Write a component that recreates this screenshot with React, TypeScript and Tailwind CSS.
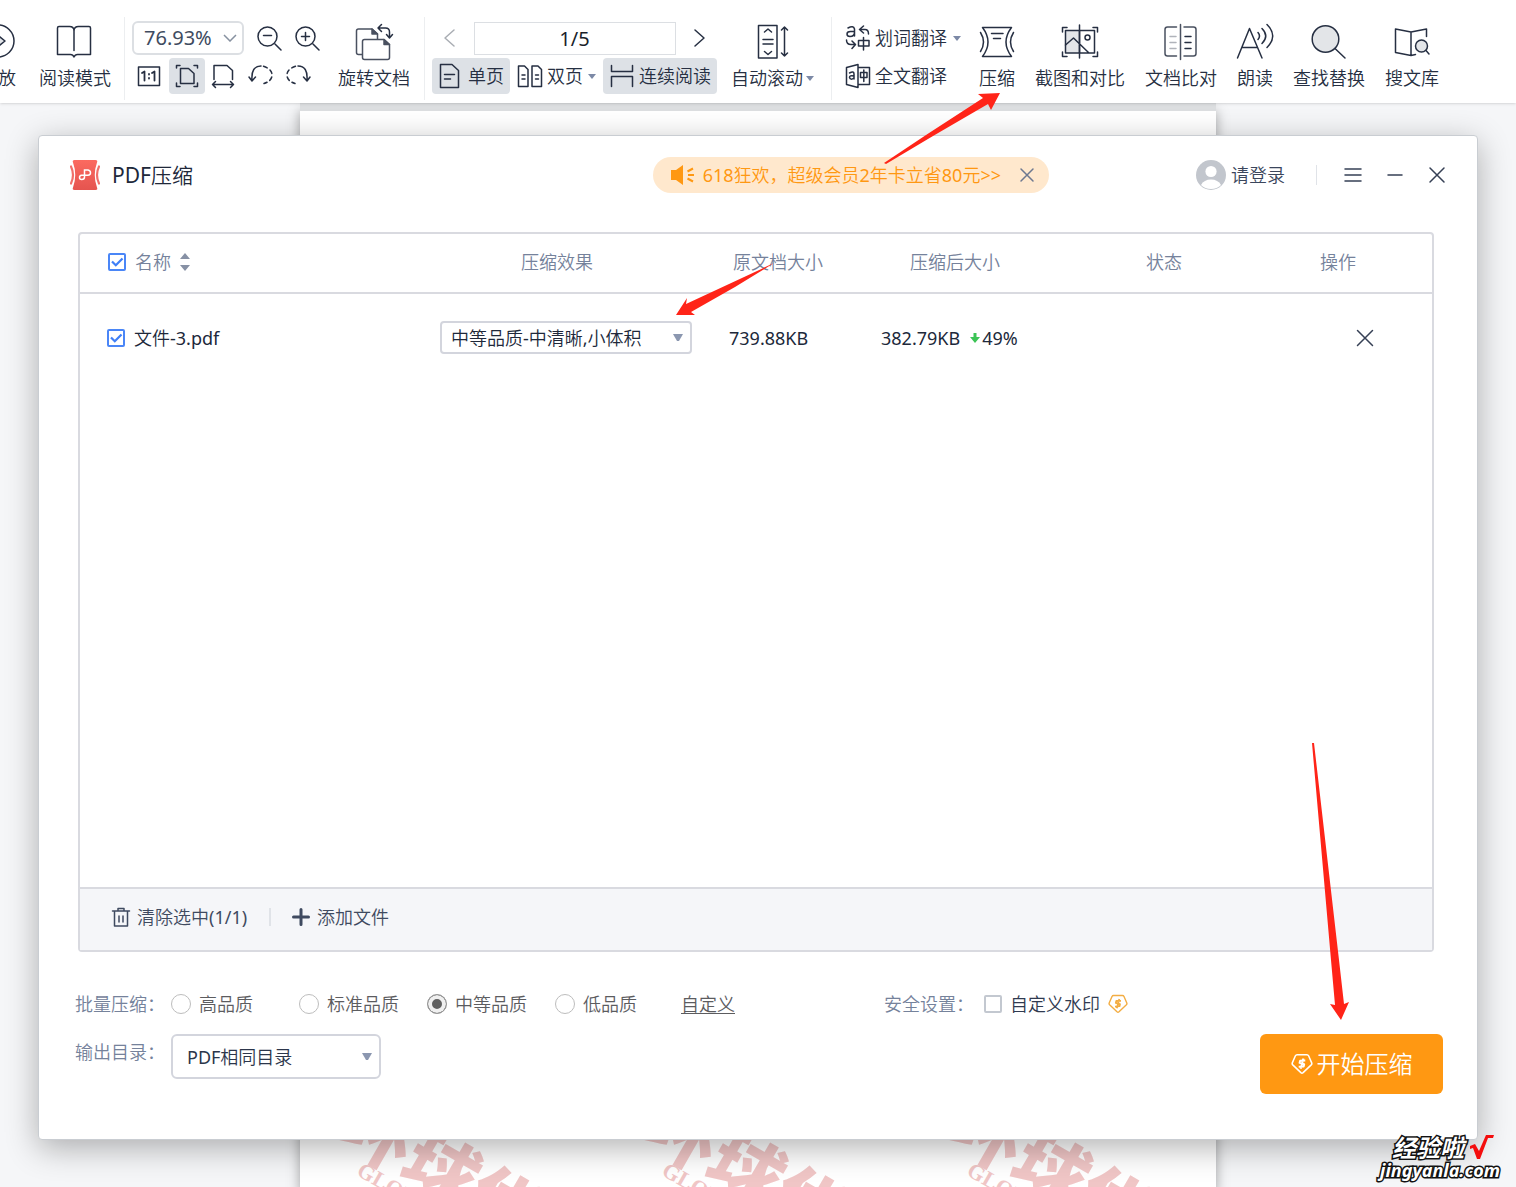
import { ReactNode } from "react"

type IconProps = {
  children: ReactNode
  size?: number
  className?: string
}

const Icon = ({ children, size = 40, className = "" }: IconProps) => (
  <svg
    width={size}
    height={size}
    viewBox={`0 0 ${size} ${size}`}
    fill="none"
    stroke="currentColor"
    strokeWidth="1.5"
    strokeLinecap="round"
    strokeLinejoin="round"
    aria-hidden="true"
    className={`shrink-0 ${className}`}
  >
    {children}
  </svg>
)

const Caret = ({ className = "" }: { className?: string }) => (
  <svg width="8" height="5" viewBox="0 0 8 5" aria-hidden="true" className={`shrink-0 fill-[#7c89a6] ${className}`}>
    <path d="M0 0H8L4 5Z" />
  </svg>
)

const Tool = ({ label, icon, caret, className = "" }: { label: string; icon: ReactNode; caret?: boolean; className?: string }) => (
  <button className={`flex shrink-0 flex-col items-center gap-1 pt-[5px] ${className}`}>
    <Icon>{icon}</Icon>
    <span className="flex items-center gap-[3px] whitespace-nowrap leading-6">
      {label}
      {caret && <Caret />}
    </span>
  </button>
)

const Divider = () => <div className="w-px shrink-0 self-stretch bg-[#eceef0]" />

const Toolbar = () => {
  return (
    <header className="relative z-10 flex items-start overflow-hidden bg-white pt-[17px] pb-[3px] text-lg text-[#262f42] shadow-sm">
      <Tool
        label="放"
        className="-ml-5 w-9 [&>span]:self-end"
        icon={
          <>
            <circle cx="20" cy="19" r="16" />
            <path d="M19 12.500L27 19L19 25.500Z" fill="#e3e5e8" />
          </>
        }
      />
      <Tool
        label="阅读模式"
        className="ml-[23px] mr-[13px]"
        icon={<path d="M2.500 32.500V6Q2.500 4.500 4 4.500H14.500Q19 4.500 19 9Q19 4.500 23.500 4.500H34Q35.500 4.500 35.500 6V32.500H22.500Q20 32.500 19 35Q18 32.500 15.500 32.500ZM19 9V28.500" />}
      />
      <Divider />

      <div className="flex shrink-0 flex-col gap-0.5 px-[7px] pt-[3px] pb-1.5">
        <div className="flex h-9 items-center gap-3">
          <div className="relative">
            <select aria-label="缩放" className="h-[34px] w-[112px] appearance-none rounded-md border-2 border-[#dcdfe3] bg-white pl-2.5 text-xl text-[#404b60]">
              <option>76.93%</option>
            </select>
            <svg width="14" height="8" viewBox="0 0 14 8" className="pointer-events-none absolute top-[13px] right-[7px] fill-none stroke-[#8791a0] stroke-[1.500]" aria-hidden="true">
              <path d="M1 1L7 7L13 1" />
            </svg>
          </div>
          <button aria-label="缩小">
            <Icon size={26}>
              <circle cx="11.500" cy="11.500" r="9.500" />
              <path d="M7.500 10.500H15.500M19 19L25 25" />
            </Icon>
          </button>
          <button aria-label="放大">
            <Icon size={26}>
              <circle cx="11.500" cy="11.500" r="9.500" />
              <path d="M7.500 11.500H15.500M11.500 7.500V15.500M19 19L25 25" />
            </Icon>
          </button>
        </div>
        <div className="flex h-9 items-center">
          <button aria-label="实际大小" className="ml-1 mr-[7px]">
            <Icon size={26}>
              <path d="M2.500 4H23.500V22.500H2.500Z" />
              <path d="M6 10L8.500 8.500V17.500M16 10L18.500 8.500V17.500M13 11V11.500M13 15V15.500" strokeWidth="1.800" />
            </Icon>
          </button>
          <button aria-label="适合页面" className="rounded bg-[#dde1e6] p-[5px]">
            <Icon size={26}>
              <path d="M2.500 5V2.500H6M20 2.500H23.500V5M2.500 20V23.500H6M20 23.500H23.500V20M6.500 5.500H14.500L20 10.500V20.500H6.500Z" />
            </Icon>
          </button>
          <button aria-label="适合宽度" className="ml-[5px]">
            <Icon size={26}>
              <path d="M4 16.500V2.500H17L22.500 7.500V16.500M2.500 21.500H23.500M5.500 18.500L2.500 21.500L5.500 24.500M20.500 18.500L23.500 21.500L20.500 24.500" />
            </Icon>
          </button>
          <button aria-label="向左旋转" className="ml-3">
            <Icon size={26}>
              <path d="M4 17Q3 3 13 3M1 14L4 18L7.500 14" />
              <path d="M15.500 3.300Q24 6 24 12Q24 18 16 20.500" strokeDasharray="4 3.500" />
            </Icon>
          </button>
          <button aria-label="向右旋转" className="ml-[11px]">
            <Icon size={26}>
              <path d="M22 17Q23 3 13 3M25 14L22 18L18.500 14" />
              <path d="M10.500 3.300Q2 6 2 12Q2 18 10 20.500" strokeDasharray="4 3.500" />
            </Icon>
          </button>
        </div>
      </div>

      <Tool
        label="旋转文档"
        className="ml-[11px] mr-3.5"
        icon={
          <g stroke="#4a5160">
            <path d="M8 32.500H4.500Q2.500 32.500 2.500 30.500V9Q2.500 7 4.500 7H18L23.500 12V17" />
            <path d="M10.500 17.500H30L35.500 22.500V35.500Q35.500 37.500 33.500 37.500H10.500Q8.500 37.500 8.500 35.500V19.500Q8.500 17.500 10.500 17.500Z" fill="white" />
            <path d="M30 17.500V22.500H35.500ZM18 7V12H23.500Z" fill="#4a5160" />
            <path d="M24 6H31.500Q35.500 6 35.500 10V15.500M27.500 2.500L24 6L27.500 9.500M32.500 12.500L35.500 16L38.500 12.500" stroke="#262f42" />
          </g>
        }
      />
      <Divider />

      <div className="flex shrink-0 flex-col gap-0.5 px-[7px] pt-[3px] pb-1.5">
        <div className="flex h-9 items-center justify-between px-2.5">
          <button aria-label="上一页" className="text-[#a9adb3]">
            <Icon size={16} className="overflow-visible">
              <path d="M12 0L3 8L12 16" />
            </Icon>
          </button>
          <input aria-label="页码" defaultValue="1/5" className="h-[33px] w-[202px] border border-[#dcdfe3] text-center text-xl text-[#1a1f2b]" />
          <button aria-label="下一页">
            <Icon size={16} className="overflow-visible">
              <path d="M4 0L13 8L4 16" />
            </Icon>
          </button>
        </div>
        <div className="flex h-9 items-center gap-[7px]">
          <button className="flex h-9 items-center gap-1 whitespace-nowrap rounded bg-[#dde1e6] px-1.5">
            <Icon size={26}>
              <path d="M2.500 1.500H14L20.500 7.500V24.500H2.500ZM6.500 11.500H16.500M6.500 16H12.500" />
            </Icon>
            单页
          </button>
          <button className="flex items-center gap-1 whitespace-nowrap">
            <Icon size={26}>
              <path d="M1.500 3H7.500L11 6.500V23.500H1.500ZM15 3H21L24.500 6.500V23.500H15ZM5 12H8M5 16H8M18.500 12H21.500M18.500 16H21.500" />
            </Icon>
            双页
            <Caret className="ml-px" />
          </button>
          <button className="flex h-9 items-center gap-1 whitespace-nowrap rounded bg-[#dde1e6] px-1.5">
            <Icon size={26}>
              <path d="M2.500 2.500V8.500H23.500V2.500M2.500 23.500V13.500H23.500V23.500" />
            </Icon>
            连续阅读
          </button>
        </div>
      </div>

      <Tool
        label="自动滚动"
        caret
        className="ml-[7px] mr-[17px]"
        icon={
          <path d="M5.500 3.500H24V36H5.500ZM11.500 10L15 7L18.500 10M10 17.500H20M10 22H20M11.500 29.500L15 32.500L18.500 29.500M31.500 5V34M28.500 8L31.500 5L34.500 8M28.500 31L31.500 34L34.500 31" />
        }
      />
      <Divider />

      <div className="flex shrink-0 flex-col items-start gap-0.5 pt-[3px] pb-1.5 pl-[13px]">
        <button className="flex h-9 items-center gap-1 whitespace-nowrap">
          <Icon size={26}>
            <path d="M3 3Q8.500 0 9.500 4V11M9.500 6.500H5.500Q2 6.500 2 9Q2 11.500 5 11.500Q9.500 11.500 9.500 7M18.500 1L14.500 4.500L18.500 8M15 4.500H20Q23.500 4.500 23.500 9M13.500 15.500H24V21H13.500ZM18.500 12.500V25M1.500 15Q1.500 19.500 6 19.500H9.500M7 16L10.500 19.500L7 23.500" />
          </Icon>
          划词翻译
          <Caret className="ml-0.5" />
        </button>
        <button className="flex h-9 items-center gap-1 whitespace-nowrap">
          <Icon size={26}>
            <path d="M13 1.500V24.500L1.500 21.500V4.500ZM13 4.500H24.500V21.500H13M4.500 10Q9 7.500 9 11V16M9 13Q4.500 12 4.500 14.500Q5.500 17.500 9 15M15.500 9.500H22V14.500H15.500ZM18.800 7V18.500" />
          </Icon>
          全文翻译
        </button>
      </div>

      <div className="ml-[18px] flex gap-5">
        <Tool
          label="压缩"
          className="w-9"
          icon={<path d="M5.500 5.500H34.500Q23.500 20 34.500 34.500H5.500Q16.500 20 5.500 5.500M3.500 10.500Q9.500 20 3.500 29.500M36.500 10.500Q30.500 20 36.500 29.500M14.500 11.500H26M16.500 16.500H23.500" />}
        />
        <Tool
          label="截图和对比"
          icon={
            <>
              <path d="M5.500 8.500H19.500V31H5.500Z" fill="#e3e5e8" />
              <path d="M19.500 8.500H34.500V31H19.500M5.500 23L13.500 16L29 31M19.500 3V36M2.500 10V5.500H7M33 5.500H37.500V10M2.500 30V34.500H7M33 34.500H37.500V30" />
              <circle cx="27.500" cy="15.500" r="2.500" />
            </>
          }
        />
        <Tool
          label="文档比对"
          icon={
            <>
              <path d="M15.500 5H6.500Q4 5 4 7.500V31.500Q4 34 6.500 34H15.500M23 5H32.500Q35 5 35 7.500V31.500Q35 34 32.500 34H23M19.500 2.500V37.500" stroke="#4a5160" />
              <path d="M9 14.500H15M9 20.500H15M9 26.500H15" stroke="#b0b3ba" />
              <path d="M24 14.500H30M24 20.500H30M24 26.500H30" />
            </>
          }
        />
        <Tool
          label="朗读"
          className="w-9"
          icon={<path d="M2.500 36L14.500 6.500L27 36M7 25.500H22.500M23 10.500Q26 14 23 17.500M27 6.500Q34.500 14 27 21.500M32 2.500Q43.500 14 32 25.500" />}
        />
        <Tool
          label="查找替换"
          icon={
            <>
              <circle cx="16.500" cy="17" r="13.300" fill="#e3e5e8" />
              <path d="M26 26.500L36 36" />
            </>
          }
        />
        <Tool
          label="搜文库"
          icon={
            <>
              <path d="M19 10L3.500 7V30.500L19 33.500ZM19 10L34.500 7V14.500M19 33.500L23.500 32.500" />
              <circle cx="29.500" cy="24" r="6" fill="#e3e5e8" />
              <path d="M34 28.500L37 32" />
            </>
          }
        />
      </div>
    </header>
  )
}

const Stamp = () => (
  <div className="w-[305px] shrink-0 rotate-[30deg] whitespace-nowrap text-[#f0c6c6]">
    <p className="font-['Noto_Sans_CJK_SC'] text-[72px] font-black leading-[66px]">环球优路</p>
    <p className="pl-9 font-['Liberation_Serif'] text-[22px] font-bold leading-6">GLOBAL</p>
  </div>
)

const DocumentPage = () => (
  <div className="absolute inset-y-0 left-1/2 w-[916px] -translate-x-1/2 border-t-8 border-[#dcdee0] bg-white shadow-[0_8px_12px_rgba(0,0,0,0.35)]">
    <div className="absolute inset-0 flex items-end overflow-hidden pl-6">
      <div className="flex translate-y-14">
        <Stamp />
        <Stamp />
        <Stamp />
      </div>
    </div>
  </div>
)

const Check = ({ label, checked }: { label: string; checked?: boolean }) => (
  <span className="relative flex shrink-0">
    <input
      type="checkbox"
      aria-label={label}
      defaultChecked={checked}
      className="peer size-[18px] appearance-none rounded-xs border-2 border-[#c3c8d0] checked:border-[#4a86f7]"
    />
    <svg viewBox="0 0 18 18" aria-hidden="true" className="pointer-events-none absolute inset-0 hidden fill-none stroke-[#3f7ff7] stroke-[2.200] peer-checked:block">
      <path d="M4 8.500L7.800 12.300L14.500 5.500" />
    </svg>
  </span>
)

const Gem = ({ size, className = "" }: { size: number; className?: string }) => (
  <svg width={size} height={size} viewBox="0 0 20 20" fill="none" stroke="currentColor" strokeWidth="1.400" strokeLinejoin="round" aria-hidden="true" className={className}>
    <path d="M5.500 1.500H14.500Q15.500 1.500 16 2.500L18.800 9Q19.200 10 18.400 10.800L11 17.800Q10 18.700 9 17.800L1.600 10.800Q0.800 10 1.200 9L4 2.500Q4.500 1.500 5.500 1.500Z" />
    <path d="M13 6.800L8.300 7L7.800 9L12 10.200L11.500 12.200L7 12.600M11.300 5L8.800 14.300" strokeWidth="1.800" />
  </svg>
)

const DialogHeader = () => (
  <div className="flex h-9 items-center pr-[31px] pl-[31px]">
    <svg width="30" height="30" viewBox="0 0 30 30" fill="none" aria-hidden="true">
      <defs>
        <linearGradient id="logo" x1="0" y1="0" x2="0" y2="1">
          <stop stopColor="#fb6a60" />
          <stop offset="1" stopColor="#e5544f" />
        </linearGradient>
      </defs>
      <path d="M4.500 0H25.500Q28 0 27 2.500Q22.500 15 27 27.500Q28 30 25.500 30H4.500Q2 30 3 27.500Q7.500 15 3 2.500Q2 0 4.500 0Z" fill="url(#logo)" />
      <path d="M1 6.500Q5 15 1 23.500M29 6.500Q25 15 29 23.500" stroke="#f0706a" strokeWidth="2.200" strokeLinecap="round" />
      <path d="M14.500 15V10H18Q20.500 10.500 20.500 12.800Q20.500 15.200 18 15.200H11.500Q9.500 15.500 9.500 17.500Q9.500 19.500 11.700 19.500Q14.500 19.500 14.500 17V15" stroke="white" strokeWidth="1.500" />
    </svg>
    <h1 className="ml-3 text-[21px] leading-8 text-[#20283a]">PDF压缩</h1>

    <div className="mr-[147px] ml-auto flex h-9 items-center rounded-full bg-[#ffe8cd] pr-3.5 pl-[18px] text-[#ff9812]">
      <svg width="24" height="20" viewBox="0 0 24 20" aria-hidden="true">
        <path d="M0 5H5L12 0V20L5 15H0Z" fill="currentColor" />
        <path d="M16.500 6.500L22 3.500M17 10H23M16.500 13.500L22 16.500" stroke="currentColor" strokeWidth="2" />
      </svg>
      <a href="#promo" className="ml-2 whitespace-nowrap">
        618狂欢，超级会员2年卡立省80元&gt;&gt;
      </a>
      <button aria-label="关闭广告" className="ml-[18px] text-[#6d7890]">
        <Icon size={16}>
          <path d="M2 2L14 14M14 2L2 14" />
        </Icon>
      </button>
    </div>

    <button className="flex items-center gap-[5px] whitespace-nowrap text-[#3b465c]">
      <svg width="30" height="30" viewBox="0 0 30 30" aria-hidden="true">
        <circle cx="15" cy="15" r="15" fill="#c2c6cd" />
        <circle cx="15" cy="11.500" r="5.600" fill="white" />
        <path d="M5 25Q8 19.500 15 19.500Q22 19.500 25 25Q21 29 15 29Q9 29 5 25Z" fill="white" />
      </svg>
      请登录
    </button>
    <div className="mr-[27px] ml-[31px] h-5 w-px bg-[#e0e3e8]" />
    <div className="flex gap-6 text-[#364055]">
      <button aria-label="菜单">
        <Icon size={18}>
          <path d="M1 3H17M1 9H17M1 15H17" />
        </Icon>
      </button>
      <button aria-label="最小化">
        <Icon size={18}>
          <path d="M2 9H16" />
        </Icon>
      </button>
      <button aria-label="关闭">
        <Icon size={18}>
          <path d="M2 2L16 16M16 2L2 16" />
        </Icon>
      </button>
    </div>
  </div>
)

const FileTable = () => (
  <section className="mt-[39px] mr-[43px] ml-[39px] flex flex-1 flex-col rounded-sm border-2 border-[#d9dae0]">
    <table className="w-full table-fixed text-left">
      <colgroup>
        <col className="w-[360px]" />
        <col className="w-[289px]" />
        <col className="w-[152px]" />
        <col className="w-[255px]" />
        <col className="w-[184px]" />
        <col />
      </colgroup>
      <thead>
        <tr className="h-[59px] border-b-2 border-[#d9dae0] text-[#75829b] *:pb-0.5 *:font-normal">
          <th>
            <div className="flex items-center gap-[9px] pl-7">
              <Check label="全选" checked />
              名称
              <svg width="10" height="18" viewBox="0 0 10 18" aria-hidden="true" className="fill-[#8791a5]">
                <path d="M5 0L10 6H0ZM5 18L10 12H0Z" />
              </svg>
            </div>
          </th>
          <th className="pl-[81px]">压缩效果</th>
          <th className="pl-1">原文档大小</th>
          <th className="pl-[29px]">压缩后大小</th>
          <th className="pl-2.5">状态</th>
          <th>操作</th>
        </tr>
      </thead>
      <tbody>
        <tr className="h-[88px] text-[#20283a]">
          <td>
            <div className="flex items-center gap-[9px] pl-[27px]">
              <Check label="文件-3.pdf" checked />
              文件-3.pdf
            </div>
          </td>
          <td>
            <div className="relative w-[252px]">
              <select aria-label="压缩效果" className="h-[33px] w-full appearance-none rounded border-2 border-[#d3d5dd] bg-white pl-[9px] text-[#20283a]">
                <option>中等品质-中清晰,小体积</option>
              </select>
              <svg width="10" height="7" viewBox="0 0 10 7" aria-hidden="true" className="pointer-events-none absolute top-[13px] right-[9px] fill-[#8b97b0]">
                <path d="M0 0H10L6 7H4Z" />
              </svg>
            </div>
          </td>
          <td>739.88KB</td>
          <td>
            <span className="flex items-center">
              382.79KB
              <svg width="10" height="12" viewBox="0 0 10 12" aria-hidden="true" className="mr-0.5 ml-2.5 fill-[#3cc456]">
                <path d="M3.500 1H6.500V5H10L5 11L0 5H3.500Z" />
              </svg>
              49%
            </span>
          </td>
          <td />
          <td className="pl-9">
            <button aria-label="删除" className="flex text-[#364055]">
              <Icon size={18}>
                <path d="M1.500 1.500L16.500 16.500M16.500 1.500L1.500 16.500" />
              </Icon>
            </button>
          </td>
        </tr>
      </tbody>
    </table>

    <div className="mt-auto flex items-center border-t-2 border-[#d9dae0] bg-[#f5f6f9] pt-[15px] pb-5 pl-8 leading-[26px] text-[#3f4a60]">
      <button className="flex items-center gap-[7px]">
        <Icon size={18} className="overflow-visible">
          <path d="M0.500 3H17.500M2.500 3V18H15.500V3M6 3V0.500H12V3M7 8V14M11 8V14" />
        </Icon>
        清除选中(1/1)
      </button>
      <div className="mr-[21px] ml-[22px] h-[18px] w-0.5 bg-[#e0e3e8]" />
      <button className="flex items-center gap-[7px]">
        <Icon size={18}>
          <path d="M1.500 9H16.500M9 1.500V16.500" strokeWidth="3" />
        </Icon>
        添加文件
      </button>
    </div>
  </section>
)

const Quality = ({ label, checked, className = "" }: { label: string; checked?: boolean; className?: string }) => (
  <label className={`flex items-center gap-2 whitespace-nowrap text-[#5c5c5f] ${className}`}>
    <input
      type="radio"
      name="quality"
      defaultChecked={checked}
      className="size-5 appearance-none rounded-full border border-[#bdbdbd] checked:border-[#999] checked:bg-[#606060] checked:shadow-[inset_0_0_0_4px_#f0f0f0]"
    />
    {label}
  </label>
)

const Settings = () => (
  <div className="flex items-end justify-between pt-[38px] pr-[34px] pb-[45px] pl-9 text-[#75829b]">
    <div className="flex flex-col gap-4">
      <div className="flex h-7 items-center">
        <span className="w-24">批量压缩：</span>
        <Quality label="高品质" className="w-32" />
        <Quality label="标准品质" className="w-32" />
        <Quality label="中等品质" checked className="w-32" />
        <Quality label="低品质" className="w-[126px]" />
        <a href="#custom" className="w-[203px] text-[#5c5c5f] underline underline-offset-2">
          自定义
        </a>
        <span className="w-[100px]">安全设置：</span>
        <Check label="自定义水印" />
        <span className="ml-2 text-[#303a50]">自定义水印</span>
        <Gem size={20} className="ml-2 text-[#f3ad43]" />
      </div>
      <div className="flex h-[60px] items-start">
        <label htmlFor="output" className="w-24 leading-9">
          输出目录：
        </label>
        <div className="relative w-[210px]">
          <select id="output" className="h-[45px] w-full appearance-none rounded-md border-2 border-[#d3d5dd] bg-white pl-3.5 text-[#2c364b]">
            <option>PDF相同目录</option>
          </select>
          <svg width="10" height="7" viewBox="0 0 10 7" aria-hidden="true" className="pointer-events-none absolute top-[19px] right-[9px] fill-[#8b97b0]">
            <path d="M0 0H10L6 7H4Z" />
          </svg>
        </div>
      </div>
    </div>
    <button className="flex h-[60px] w-[183px] shrink-0 items-center justify-center gap-1 rounded-md bg-[#ff9812] text-2xl text-white">
      <Gem size={22} />
      开始压缩
    </button>
  </div>
)

const Arrows = () => (
  <svg width="1516" height="1187" viewBox="0 0 1516 1187" aria-hidden="true" className="pointer-events-none absolute top-0 left-0 z-20 fill-[#ff2418]">
    <path d="M884 163L926 135L983 98L978 94L1000 93L991 110L988 104L933 136L886 164Z" />
    <path d="M774 263L686 304L687 298L676 315L695 315L691 312L735 287Z" />
    <path d="M1312 743L1331 960L1335 1005L1330 1004L1341 1020L1349 1002L1344 1004L1339 960L1314 743Z" />
  </svg>
)

const SiteMark = () => (
  <div className="pointer-events-none absolute right-4 bottom-[7px] z-20 flex flex-col items-end font-bold text-white italic [-webkit-text-stroke:3px_#111] [paint-order:stroke_fill]">
    <div className="flex items-center gap-1.5 pr-1.5 font-['Noto_Sans_CJK_SC',sans-serif] text-2xl leading-6">
      经验啦
      <svg width="24" height="26" viewBox="0 0 24 26" aria-hidden="true" className="fill-[#f40d0d]">
        <path d="M0 12L5 10L9 17L16 1H24L23 4H18L10 25H7L3 14L0 15Z" />
      </svg>
    </div>
    <span className="text-lg leading-5">jingyanla.com</span>
  </div>
)

export default function App() {
  return (
    <div className="relative flex min-h-screen flex-col overflow-hidden bg-[#f5f6f8] font-['Noto_Sans','Noto_Sans_CJK_SC_DemiLight','Noto_Sans_CJK_SC_Light','Noto_Sans_CJK_SC',sans-serif] text-lg">
      <Toolbar />
      <main className="relative flex flex-1 flex-col px-[38px] pt-8 pb-[47px]">
        <DocumentPage />
        <div role="dialog" aria-label="PDF压缩" className="relative flex flex-1 flex-col rounded-sm border border-[#c9cdd2] bg-white pt-[21px] shadow-[0_8px_32px_rgba(0,0,0,0.3)]">
          <DialogHeader />
          <FileTable />
          <Settings />
        </div>
      </main>
      <Arrows />
      <SiteMark />
    </div>
  )
}
